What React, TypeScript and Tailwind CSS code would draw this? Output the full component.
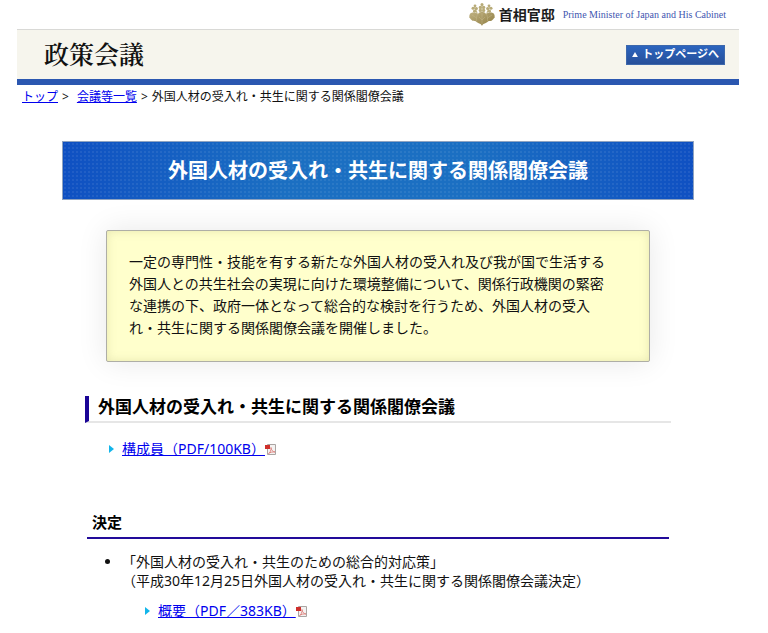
import React from "react";

const MEETING_NAME = "外国人材の受入れ・共生に関する関係閣僚会議";

const KiriCrest = () => (
  <svg className="w-[26px] h-[23px] shrink-0" aria-hidden="true" viewBox="0 0 26 23">
    <defs>
      <linearGradient id="kiri" x1="0" y1="0" x2="1" y2="1">
        <stop offset="0" stopColor="#bfb181" />
        <stop offset="1" stopColor="#8f7d42" />
      </linearGradient>
    </defs>
    <g stroke="#c3b88c" strokeWidth="1.2" fill="none">
      <path d="M13 12V2M8 11C8 8 6 6 5.500 4M18 11c0-3 2-5 2.500-7" />
    </g>
    <g fill="#b8ab78">
      <circle cx="13" cy="1.6" r="1.5" />
      <circle cx="11.3" cy="4.4" r="1.6" />
      <circle cx="14.7" cy="4.4" r="1.6" />
      <circle cx="11.3" cy="7.4" r="1.6" />
      <circle cx="14.7" cy="7.4" r="1.6" />
      <circle cx="6" cy="2.8" r="1.4" />
      <circle cx="4" cy="5.2" r="1.500" />
      <circle cx="7.4" cy="5.6" r="1.500" />
      <circle cx="5.600" cy="8.2" r="1.6" />
      <circle cx="20" cy="2.8" r="1.4" />
      <circle cx="22" cy="5.2" r="1.500" />
      <circle cx="18.6" cy="5.6" r="1.500" />
      <circle cx="20.4" cy="8.2" r="1.6" />
    </g>
    <path
      fill="url(#kiri)"
      d="M9 11C6 9 2 9 1 11c-1 1.500-.4 2.500-.8 3.500 1 .3 1 1.500 2.400 2.500 1 1.200 2.600 1 4.200 1.200C8.500 20.500 12 20 13 23c1-3 4.500-2.500 6.200-4.800 1.600-.2 3.200 0 4.200-1.200 1.400-1 1.400-2.200 2.400-2.500-.4-1 .2-2-.8-3.500-1-2-5-2-8 0-1-2-3-2-4-2s-3 0-4 2Z"
    />
    <path
      stroke="#c9be92"
      strokeWidth="0.4"
      fill="none"
      d="M13 10v11M13 17l-3-3M13 17l3-3M9 11c-2 2-1.500 5-1.500 7M17 11c2 2 1.500 5 1.500 7M7.500 15L3 12M18.500 15l4.500-3"
    />
  </svg>
);

const PdfIcon = () => (
  <svg className="inline-block w-[11px] h-[11px] align-[-1px]" aria-hidden="true" viewBox="0 0 11 11">
    <path d="M2.500.5h8v10h-8z" fill="#f4f2f1" stroke="#aaa5a3" />
    <path d="M0 1h5v4H0z" fill="#cf2f2b" />
    <path
      d="M3.500 9.500C5.200 8.500 6.200 6.500 6 3.500c.2 2.400 1.600 4.200 4 4.500-2.500-.3-4.500.2-6.500 1.500Z"
      fill="none"
      stroke="#dc7f7a"
      strokeWidth="0.9"
    />
  </svg>
);

const PdfLink = ({ href, label }: { href: string; label: string }) => (
  <div className="flex items-center gap-2 leading-[22px]">
    <svg className="w-[6px] h-[8px] shrink-0" aria-hidden="true" viewBox="0 0 6 8">
      <path d="M1 0v8l5-4z" fill="#12b5ea" />
    </svg>
    <span>
      <a href={href} className="text-[#0000ee] underline">
        {label}
      </a>
      <PdfIcon />
    </span>
  </div>
);

const Header = () => (
  <header>
    <div className="flex items-center justify-end h-[29px] pr-[13px]">
      <KiriCrest />
      <span className="ml-1 text-[14px] font-bold text-[#1c1c1c]">首相官邸</span>
      <span className="ml-2 text-[10px] text-[#3f57b0] font-['Liberation_Serif',serif]">
        Prime Minister of Japan and His Cabinet
      </span>
    </div>
    <div className="flex items-center justify-between h-[56px] pl-[27px] pr-[14px] bg-[#f6f5ed] border-t border-t-[#d9d9d6] border-b-6 border-b-[#2b57b0]">
      <p className="pb-1 text-[25px] leading-[30px] font-semibold text-[#111] font-['Noto_Serif_CJK_JP','Noto_Sans_CJK_JP',serif]">
        政策会議
      </p>
      <a
        href="#top"
        className="flex items-center gap-1 h-[20px] px-[5px] border border-[#3d68ac] bg-linear-to-b from-[#2c65bf] to-[#27509a] text-[11px] font-bold text-white"
      >
        <svg className="w-[6px] h-[5px]" aria-hidden="true" viewBox="0 0 7 6">
          <path d="M3.500 0L7 6H0z" fill="#fff" />
        </svg>
        トップページへ
      </a>
    </div>
  </header>
);

const App = () => {
  return (
    <div className="min-h-screen bg-white pl-[17px] pr-[29px] text-[14px] text-[#111] font-['Noto_Sans','Noto_Sans_CJK_JP',sans-serif]">
      <Header />

      <nav className="flex items-center h-6 pl-[5px] text-[12px]">
        <a href="#top" className="text-[#0000ee] underline">
          トップ
        </a>
        <span className="ml-1 mr-2">&gt;</span>
        <a href="#list" className="text-[#0000ee] underline">
          会議等一覧
        </a>
        <span className="mx-1">&gt;</span>
        <span>{MEETING_NAME}</span>
      </nav>

      <main>
        <h1 className="mt-8 mx-[45px] py-[14px] border border-[#8fa3c0] text-center text-[20px] leading-[29px] font-bold text-white bg-[radial-gradient(circle_at_center,#ffffff12_1px,transparent_1px),linear-gradient(to_right,#0f50c2,#1b6fc2_35%,#1b6fc2_65%,#0f50c2)] bg-size-[4px_4px,100%_100%]">
          {MEETING_NAME}
        </h1>

        <p className="mt-[30px] mx-[89px] pt-[20px] pb-[22px] pl-[22px] pr-[34px] rounded-xs border border-[#aeaea6] bg-[#ffffcc] leading-[22px] shadow-[0_0_30px_#00000018,inset_0_0_10px_#a0a06440]">
          一定の専門性・技能を有する新たな外国人材の受入れ及び我が国で生活する外国人との共生社会の実現に向けた環境整備について、関係行政機関の緊密な連携の下、政府一体となって総合的な検討を行うため、外国人材の受入れ・共生に関する関係閣僚会議を開催しました。
        </p>

        <section className="mt-[34px] mx-[68px]">
          <h2 className="pl-[9px] pb-[3px] border-l-4 border-l-[#1a0596] border-b-2 border-b-[#e6e6e6] text-[17px] leading-[22px] font-bold text-black">
            {MEETING_NAME}
          </h2>
          <ul className="mt-[15px] ml-[23px]">
            <li>
              <PdfLink href="#members" label="構成員（PDF/100KB）" />
            </li>
          </ul>

          <h3 className="mt-[51px] mx-[2px] pl-[5px] pb-1 border-b-2 border-b-[#220b9a] text-[15px] leading-[22px] font-bold text-black">
            決定
          </h3>
          <ul className="mt-[13px] pl-[37px] list-disc">
            <li className="leading-[19px]">
              「外国人材の受入れ・共生のための総合的対応策」
              <br />
              （平成30年12月25日{MEETING_NAME}決定）
              <ul className="mt-[10px] ml-[22px]">
                <li className="list-none">
                  <PdfLink href="#summary" label="概要（PDF／383KB）" />
                </li>
              </ul>
            </li>
          </ul>
        </section>
      </main>
    </div>
  );
};

export default App;
